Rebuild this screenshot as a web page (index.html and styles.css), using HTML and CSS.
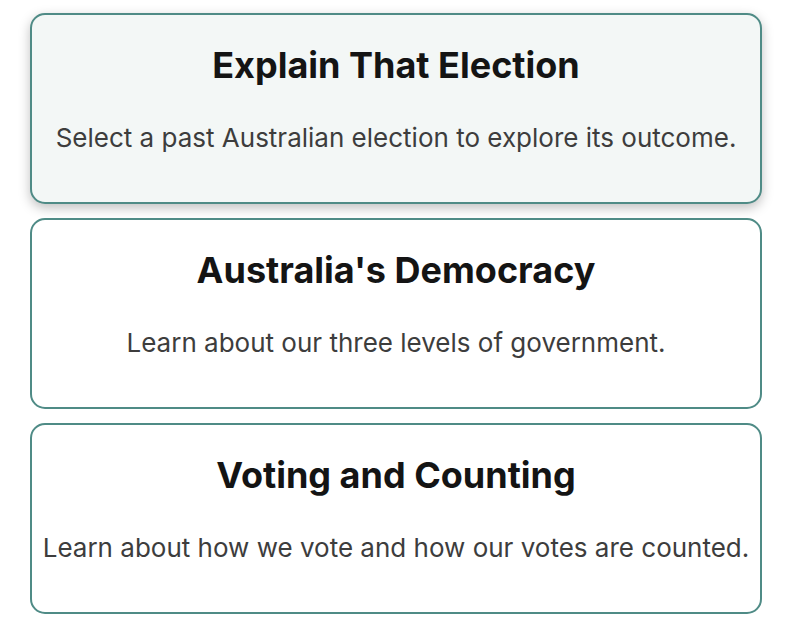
FILE: index.html
```html
<!DOCTYPE html>
<html lang="en">
<head>
<meta charset="utf-8">
<title>Menu</title>
<link rel="stylesheet" href="styles.css">
</head>
<body>
<main class="menu">
  <a class="card card-active" href="#">
    <h2 class="card-title">Explain That Election</h2>
    <p class="card-text">Select a past Australian election to explore its outcome.</p>
  </a>
  <a class="card" href="#">
    <h2 class="card-title">Australia's Democracy</h2>
    <p class="card-text">Learn about our three levels of government.</p>
  </a>
  <a class="card" href="#">
    <h2 class="card-title">Voting and Counting</h2>
    <p class="card-text">Learn about how we vote and how our votes are counted.</p>
  </a>
</main>
</body>
</html>
```
FILE: styles.css
```css
* { box-sizing: border-box; }
html, body { margin: 0; padding: 0; background: #ffffff; }
body { font-family: Inter, "Noto Sans", sans-serif; }
.menu {
  width: 732px;
  margin-left: 30px;
  padding-top: 13px;
  display: flex;
  flex-direction: column;
  gap: 14px;
}
.card {
  display: flex;
  flex-direction: column;
  align-items: center;
  height: 191px;
  border: 2px solid #4f8b86;
  border-radius: 15px;
  background: #ffffff;
  text-decoration: none;
  padding-top: 29px;
}
.card-active {
  background: #f3f7f6;
  box-shadow: 0 4px 12px rgba(0, 0, 0, 0.25);
}
.card-title {
  margin: 0;
  font-size: 36px;
  font-weight: 700;
  color: #141414;
  line-height: 42px;
}
.card-text {
  margin: 36px 0 0;
  font-size: 26px;
  font-weight: 400;
  color: #3d3d3d;
  line-height: 32px;
}
```
